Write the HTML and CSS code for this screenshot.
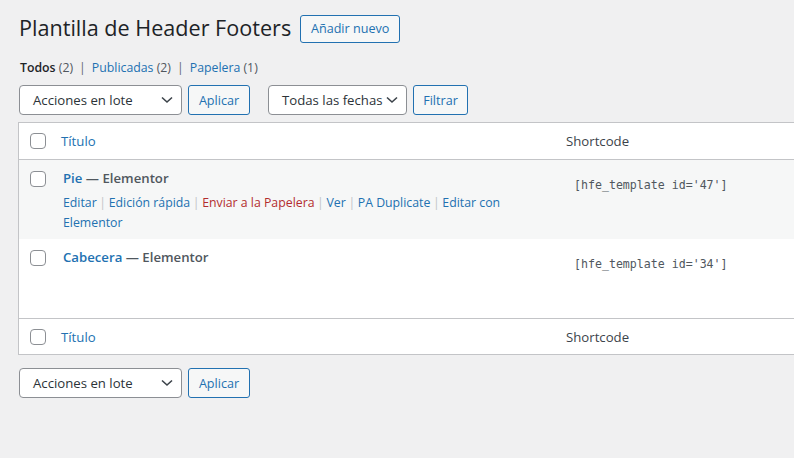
FILE: index.html
```html
<!DOCTYPE html>
<html lang="es">
<head>
<meta charset="utf-8">
<title>Plantilla de Header Footers</title>
<link rel="stylesheet" href="styles.css">
</head>
<body>
<div class="wrap">
  <div class="heading">
    <h1 class="title">Plantilla de Header Footers</h1>
    <a class="page-title-action">Añadir nuevo</a>
  </div>

  <ul class="subsubsub">
    <li><a class="current">Todos <span class="count">(2)</span></a><span class="sep">|</span></li>
    <li><a>Publicadas <span class="count">(2)</span></a><span class="sep">|</span></li>
    <li><a>Papelera <span class="count">(1)</span></a></li>
  </ul>

  <div class="tablenav top">
    <div class="select w-bulk"><span>Acciones en lote</span><svg class="chev" width="12" height="8" viewBox="0 0 12 8"><path d="M1 1.5 L6 6 L11 1.5" fill="none" stroke="#3c434a" stroke-width="1.6"/></svg></div>
    <button class="button">Aplicar</button>
    <div class="select w-date"><span>Todas las fechas</span><svg class="chev" width="12" height="8" viewBox="0 0 12 8"><path d="M1 1.5 L6 6 L11 1.5" fill="none" stroke="#3c434a" stroke-width="1.6"/></svg></div>
    <button class="button">Filtrar</button>
  </div>

  <div class="list">
    <div class="row head">
      <div class="cell check"><span class="cb"></span></div>
      <div class="cell col-title"><a>Título</a></div>
      <div class="cell col-short">Shortcode</div>
    </div>
    <div class="row item alt">
      <div class="cell check"><span class="cb"></span></div>
      <div class="cell col-title">
        <div class="row-title"><a>Pie</a> — <span class="state">Elementor</span></div>
        <div class="row-actions"><a>Editar</a><span class="sep">|</span><a>Edición rápida</a><span class="sep">|</span><a class="trash">Enviar a la Papelera</a><span class="sep">|</span><a>Ver</a><span class="sep">|</span><a>PA Duplicate</a><span class="sep">|</span><a>Editar con Elementor</a></div>
      </div>
      <div class="cell col-short"><code>[hfe_template id='47']</code></div>
    </div>
    <div class="row item">
      <div class="cell check"><span class="cb"></span></div>
      <div class="cell col-title">
        <div class="row-title"><a>Cabecera</a> — <span class="state">Elementor</span></div>
        <div class="row-actions hidden"><a>Editar</a><span class="sep">|</span><a>Edición rápida</a><span class="sep">|</span><a class="trash">Enviar a la Papelera</a><span class="sep">|</span><a>Ver</a><span class="sep">|</span><a>PA Duplicate</a><span class="sep">|</span><a>Editar con Elementor</a></div>
      </div>
      <div class="cell col-short"><code>[hfe_template id='34']</code></div>
    </div>
    <div class="row head foot">
      <div class="cell check"><span class="cb"></span></div>
      <div class="cell col-title"><a>Título</a></div>
      <div class="cell col-short">Shortcode</div>
    </div>
  </div>

  <div class="tablenav bottom">
    <div class="select w-bulk"><span>Acciones en lote</span><svg class="chev" width="12" height="8" viewBox="0 0 12 8"><path d="M1 1.5 L6 6 L11 1.5" fill="none" stroke="#3c434a" stroke-width="1.6"/></svg></div>
    <button class="button">Aplicar</button>
  </div>
</div>
</body>
</html>
```
FILE: styles.css
```css
html, body {
  margin: 0;
  padding: 0;
  background: #f0f0f1;
  overflow: hidden;
}
body {
  font-family: "Open Sans", "Noto Sans", sans-serif;
  font-size: 12.3px;
  color: #3c434a;
  width: 794px;
  height: 458px;
}
a { color: #2271b1; text-decoration: none; }
.wrap {
  padding: 13px 0 0 18px;
}
.heading {
  display: flex;
  align-items: center;
  gap: 9px;
  height: 30px;
  margin-left: 1px;
}
.title {
  margin: 0;
  font-size: 21.6px;
  font-weight: 400;
  line-height: 30px;
  color: #1d2327;
  white-space: nowrap;
}
.page-title-action {
  box-sizing: border-box;
  height: 28px;
  width: 100px;
  text-align: center;
  border: 1px solid #2271b1;
  border-radius: 3px;
  background: #f6f7f7;
  font-size: 12.6px;
  line-height: 26px;
  font-weight: 500;
  margin-top: 1px;
}
.subsubsub {
  list-style: none;
  display: flex;
  margin: 15px 0 0 2px;
  padding: 0;
  height: 20px;
  line-height: 20px;
  color: #646970;
  white-space: nowrap;
}
.subsubsub .current { color: #1d2327; font-weight: 600; }
.subsubsub .count { color: #50575e; font-weight: 400; }
.subsubsub .sep { margin: 0 6px; color: #646970; }
.tablenav {
  display: flex;
  gap: 6px;
  align-items: center;
  margin-left: 1px;
  height: 30px;
  white-space: nowrap;
}
.tablenav.top { margin-top: 7px; }
.tablenav.bottom { margin-top: 13px; }
.select {
  box-sizing: border-box;
  height: 30px;
  border: 1px solid #8c8f94;
  border-radius: 4px;
  background: #fff;
  display: flex;
  align-items: center;
  justify-content: space-between;
  padding: 0 8px 0 13px;
  color: #2c3338;
  font-size: 13.2px;
}
.w-bulk { width: 163px; }
.w-date { width: 139px; margin-left: 12px; }
.chev { flex: none; }
.button {
  box-sizing: border-box;
  height: 30px;
  border: 1px solid #2271b1;
  border-radius: 3px;
  background: #f6f7f7;
  color: #2271b1;
  font-family: inherit;
  font-size: 12.6px;
  padding: 0;
}
.tablenav .button:nth-of-type(1) { width: 62px; }
.tablenav.top .button:nth-of-type(2) { width: 55px; }
.list {
  margin-top: 7px;
  width: 900px;
  background: #fff;
  border: 1px solid #c3c4c7;
}
.row {
  display: flex;
}
.row.head {
  height: 36px;
  align-items: center;
  border-bottom: 1px solid #c3c4c7;
  font-size: 13.2px;
}
.row.head.foot {
  border-bottom: 0;
  border-top: 1px solid #c3c4c7;
  height: 35px;
}
.row.item { height: 79px; }
.row.item.alt { background: #f6f7f7; }
.cell.check { width: 34px; flex: none; }
.cb {
  display: block;
  box-sizing: border-box;
  width: 16px;
  height: 16px;
  margin-left: 11px;
  border: 1px solid #8c8f94;
  border-radius: 4px;
  background: #fff;
}
.row.item .cb { margin-top: 11px; }
.col-title { width: 505px; flex: none; box-sizing: border-box; padding-left: 8px; }
.row.item .col-title { padding: 8px 10px 0; }
.col-short { padding-left: 8px; color: #3c434a; }
.row-title {
  font-size: 13.2px;
  line-height: 20px;
  font-weight: 600;
  color: #50575e;
}
.row-actions {
  margin-top: 5px;
  line-height: 20px;
  font-size: 12.3px;
  color: #a7aaad;
  width: 445px;
}
.row-actions .sep { display: inline-block; width: 12px; text-align: center; color: #c3c4c7; }
.row-actions .trash { color: #b32d2e; }
.row-actions.hidden { visibility: hidden; }
.row.item .col-short { padding: 16px 0 0 16px; }
code {
  font-family: "DejaVu Sans Mono", "Liberation Mono", monospace;
  font-size: 11.6px;
  color: #50575e;
}
```
